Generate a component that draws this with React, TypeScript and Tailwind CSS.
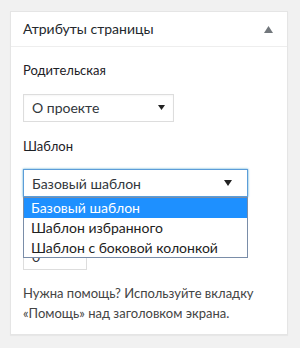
import React from "react";

export default function App() {
  return (
    <div className="w-[300px] h-[348px] bg-[#f1f1f1] pt-[11px] pl-[10px] font-['Lato',sans-serif]">
      <div className="w-[278px] bg-white border border-[#e5e5e5] shadow-[0_1px_1px_rgba(0,0,0,0.04)]">
        <div className="h-[35px] border-b border-[#eeeeee] flex items-center justify-between pl-[12px] pr-[14px]">
          <span className="text-[14px] text-[#23282d] leading-none">Атрибуты страницы</span>
          <svg width="9" height="7" viewBox="0 0 9 7" className="mt-[1px]">
            <polygon points="4.5,0 9,7 0,7" fill="#72777c" />
          </svg>
        </div>
        <div className="px-[12px] pt-[14px] pb-[11px]">
          <div className="text-[13px] leading-[19.5px] text-[#1d2126]">Родительская</div>
          <div className="mt-[13px] w-[151px] h-[28px] border border-[#dddddd] flex items-center justify-between pl-[8px] pr-[8px] shadow-[inset_0_1px_2px_rgba(0,0,0,0.04)]">
            <span className="text-[14px] text-[#32373c]">О проекте</span>
            <svg width="7" height="5" viewBox="0 0 7 5">
              <polygon points="0,0 7,0 3.5,5" fill="#222" />
            </svg>
          </div>
          <div className="mt-[15px] text-[13px] leading-[19.5px] text-[#1d2126]">Шаблон</div>
          <div className="relative mt-[13px]">
            <div className="w-[225px] h-[28px] border border-[#5b9dd9] flex items-center justify-between pl-[8px] pr-[15px] shadow-[0_0_2px_rgba(30,140,190,0.8)]">
              <span className="text-[14px] text-[#32373c]">Базовый шаблон</span>
              <svg width="8" height="6" viewBox="0 0 8 6">
                <polygon points="0,0 8,0 4,6" fill="#222" />
              </svg>
            </div>
            <div className="absolute left-0 top-[28px] w-[225px] border border-[#7a8da8] bg-white z-10 text-[14px] leading-[20px]">
              <div className="bg-[#1e90ff] text-white pl-[7px] h-[20px]">Базовый шаблон</div>
              <div className="text-[#222] pl-[7px] h-[20px]">Шаблон избранного</div>
              <div className="text-[#222] pl-[7px] h-[19px]">Шаблон с боковой колонкой</div>
            </div>
            <div className="mt-[45px] w-[64px] h-[28px] border border-[#dddddd] flex items-end pl-[8px] pb-[4px] text-[14px] leading-[16px] text-[#32373c]">0</div>
          </div>
          <p className="mt-[14px] text-[13px] leading-[19.5px] text-[#444]">
            Нужна помощь? Используйте вкладку «Помощь» над заголовком экрана.
          </p>
        </div>
      </div>
    </div>
  );
}
